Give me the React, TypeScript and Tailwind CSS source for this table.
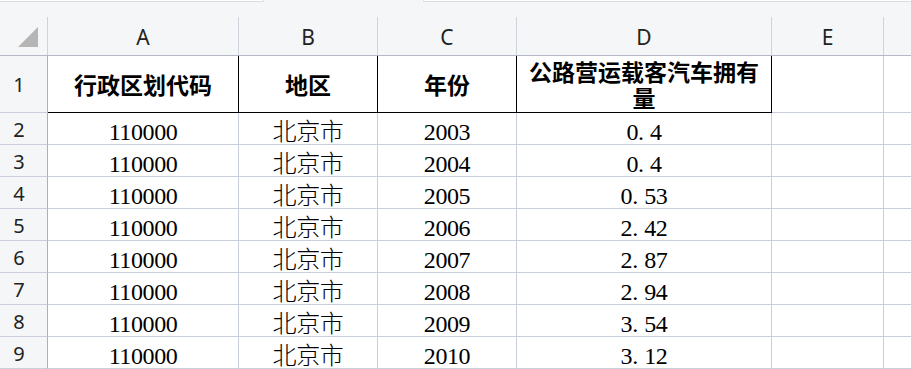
import React from 'react';

const rows = [
  { code: '110000', region: '北京市', year: '2003', value: '0.4' },
  { code: '110000', region: '北京市', year: '2004', value: '0.4' },
  { code: '110000', region: '北京市', year: '2005', value: '0.53' },
  { code: '110000', region: '北京市', year: '2006', value: '2.42' },
  { code: '110000', region: '北京市', year: '2007', value: '2.87' },
  { code: '110000', region: '北京市', year: '2008', value: '2.94' },
  { code: '110000', region: '北京市', year: '2009', value: '3.54' },
  { code: '110000', region: '北京市', year: '2010', value: '3.12' },
];

const gridCols = 'grid grid-cols-[48px_191px_139px_139px_255px_112px_1fr]';
const headFont = "font-['Noto_Sans','Liberation_Sans',sans-serif] text-[21px] leading-none text-[#222]";
const rowNumFont = "font-['Noto_Sans','Liberation_Sans',sans-serif] text-[20px] leading-none text-[#222]";
const cellFont = "font-['Liberation_Serif','Noto_Sans_CJK_SC',serif] text-[24px] leading-[23px] tracking-[-0.4px] font-[300] text-black";
const titleFont = "font-['Noto_Sans_CJK_SC',sans-serif] text-[23px] leading-[26px] font-bold text-black";

// SimSun-style number: the dot takes a full half-width cell
function Num({ text }: { text: string }) {
  return (
    <span>
      {text.split('').map((ch, i) =>
        ch === '.' ? (
          <span key={i} className="inline-block w-[0.5em]">.</span>
        ) : (
          <span key={i}>{ch}</span>
        )
      )}
    </span>
  );
}

function DataCell({ children }: { children: React.ReactNode }) {
  return (
    <div className={`flex items-end justify-center border-r border-b border-[#c9cedb] ${cellFont}`}>
      {children}
    </div>
  );
}

function RowNum({ n }: { n: number }) {
  return (
    <div className={`flex items-center justify-center pr-[9px] pt-[2px] bg-[#f5f6f8] border-r border-b border-r-[#a9b0c2] border-b-[#c9cedb] ${rowNumFont}`}>
      {n}
    </div>
  );
}

export default function App() {
  const letters = ['A', 'B', 'C', 'D', 'E'];
  const titles = ['行政区划代码', '地区', '年份', '公路营运载客汽车拥有量'];

  return (
    <div className="w-[911px] h-[369px] overflow-hidden bg-white">
      {/* strip above the column header */}
      <div className="h-[17px] bg-[#f5f6f8] flex items-start">
        <div className="w-[264px] h-[2px] bg-white border-b border-r border-[#d9dce3] rounded-br-[4px]" />
        <div className="flex-1" />
        <div className="w-[488px] h-[2px] bg-white border-b border-l border-[#d9dce3] rounded-bl-[4px]" />
      </div>

      {/* column header */}
      <div className={`${gridCols} h-[39px] bg-[#f5f6f8] border-b border-[#b3b9c9]`}>
        <div className="flex items-end justify-end pr-[9px] pb-[8px] border-r border-[#cfd3dc]">
          <svg width="20" height="20" viewBox="0 0 20 20">
            <polygon points="20,0 20,20 0,20" fill="#b5b5b5" />
          </svg>
        </div>
        {letters.map((l) => (
          <div key={l} className={`flex items-center justify-center pt-[2px] border-r border-[#cfd3dc] ${headFont}`}>
            {l}
          </div>
        ))}
        <div />
      </div>

      {/* row 1: titles */}
      <div className={`${gridCols} h-[57px]`}>
        <RowNum n={1} />
        {titles.map((t) => (
          <div key={t} className={`flex items-center justify-center text-center px-2 border-r border-b border-black ${titleFont}`}>
            {t}
          </div>
        ))}
        <div className="border-r border-b border-[#c9cedb]" />
        <div className="border-b border-[#c9cedb]" />
      </div>

      {/* data rows */}
      {rows.map((r, i) => (
        <div key={i} className={`${gridCols} h-[32px]`}>
          <RowNum n={i + 2} />
          <DataCell>{r.code}</DataCell>
          <DataCell>{r.region}</DataCell>
          <DataCell>{r.year}</DataCell>
          <DataCell>
            <Num text={r.value} />
          </DataCell>
          <DataCell>{''}</DataCell>
          <div className="border-b border-[#c9cedb]" />
        </div>
      ))}
    </div>
  );
}
